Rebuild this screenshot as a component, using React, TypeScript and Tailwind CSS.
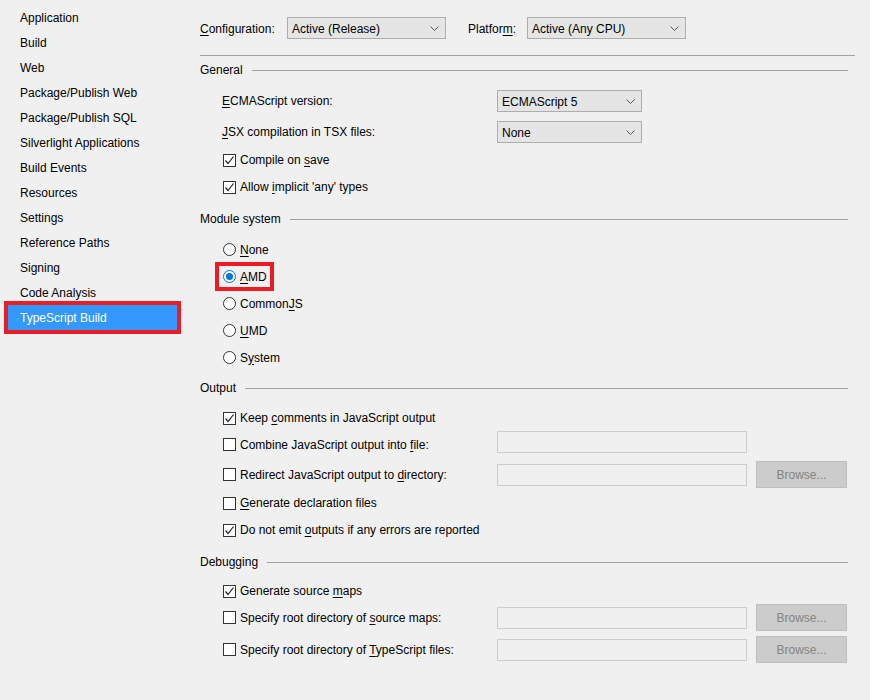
import type { ReactNode } from "react";

const navItems = [
  "Application",
  "Build",
  "Web",
  "Package/Publish Web",
  "Package/Publish SQL",
  "Silverlight Applications",
  "Build Events",
  "Resources",
  "Settings",
  "Reference Paths",
  "Signing",
  "Code Analysis",
  "TypeScript Build",
];

function K({ children }: { children: ReactNode }) {
  return <span className="underline underline-offset-[2px]">{children}</span>;
}

function Chevron() {
  return (
    <svg width="9" height="5" viewBox="0 0 9 5" className="shrink-0">
      <path d="M0.5 0.5 L4.5 4.5 L8.5 0.5" fill="none" stroke="#555" strokeWidth="1" />
    </svg>
  );
}

function Dropdown({ text, w }: { text: string; w: string }) {
  return (
    <div className={`${w} h-[22px] flex items-center justify-between pl-[4px] pr-[6px] bg-[#e5e5e5] border border-[#adadad]`}>
      <span className="pt-px">{text}</span>
      <Chevron />
    </div>
  );
}

function Checkbox({ checked }: { checked?: boolean }) {
  return (
    <div className="w-[13px] h-[13px] shrink-0 border border-[#333] bg-white flex items-center justify-center">
      {checked && (
        <svg width="11" height="11" viewBox="0 0 11 11">
          <path d="M1.5 5.5 L4 8.5 L9.5 1.5" fill="none" stroke="#222" strokeWidth="1.2" />
        </svg>
      )}
    </div>
  );
}

function Radio({ checked }: { checked?: boolean }) {
  return (
    <div
      className={`w-[13px] h-[13px] shrink-0 rounded-full border bg-white flex items-center justify-center ${
        checked ? "border-[#0078d7]" : "border-[#333]"
      }`}
    >
      {checked && <div className="w-[7px] h-[7px] rounded-full bg-[#0078d7]" />}
    </div>
  );
}

function SectionHeader({ title, className }: { title: string; className: string }) {
  return (
    <div className={`h-[20px] flex items-center pr-[7px] ${className}`}>
      <span>{title}</span>
      <div className="flex-1 h-px bg-[#a0a0a0] ml-[9px]" />
    </div>
  );
}

function TextBox() {
  return <div className="w-[250px] h-[22px] bg-[#f0f0f0] border border-[#cccccc]" />;
}

function Browse() {
  return (
    <div className="ml-[9px] w-[91px] h-[27px] bg-[#cccccc] border border-[#bfbfbf] flex items-center justify-center text-[#838383]">
      Browse...
    </div>
  );
}

function CheckRow({
  checked,
  label,
  className,
  h = "h-[22px]",
  labelClass = "",
  box,
  browse,
}: {
  checked?: boolean;
  label: ReactNode;
  className: string;
  h?: string;
  labelClass?: string;
  box?: boolean;
  browse?: boolean;
}) {
  return (
    <div className={`${h} flex items-center pl-[23px] ${className}`}>
      <div className={`w-[274px] flex items-center gap-[4px] ${labelClass}`}>
        <Checkbox checked={checked} />
        <span>{label}</span>
      </div>
      {box && <TextBox />}
      {browse && <Browse />}
    </div>
  );
}

function RadioRow({ label, checked }: { label: ReactNode; checked?: boolean }) {
  return (
    <div className="h-[27px] flex items-center pl-[19px]">
      <div
        className={`inline-flex items-center gap-[4px] h-[21px] pl-[4px] pr-[3px] ${
          checked ? "outline-4 outline-[#ed1c24]" : ""
        }`}
      >
        <Radio checked={checked} />
        <span>{label}</span>
      </div>
    </div>
  );
}

export default function App() {
  return (
    <div
      className="w-[870px] h-[700px] bg-[#f0f0f0] text-black text-[12px] flex overflow-hidden"
      style={{ fontFamily: '"Liberation Sans", Arial, sans-serif' }}
    >
      {/* left nav */}
      <div className="w-[200px] shrink-0 pt-[5px] pl-[8px]">
        {navItems.map((item) => {
          const active = item === "TypeScript Build";
          return (
            <div
              key={item}
              className={`w-[169px] h-[25px] flex items-center pl-[12px] ${
                active ? "bg-[#3399ff] text-white outline-4 outline-[#ed1c24]" : ""
              }`}
            >
              {item}
            </div>
          );
        })}
      </div>

      {/* property page */}
      <div className="flex-1 flex flex-col pt-[17px] pr-[15px]">
        <div className="h-[22px] flex items-center">
          <span className="w-[87px] pt-px">
            <K>C</K>onfiguration:
          </span>
          <Dropdown text="Active (Release)" w="w-[159px]" />
          <span className="w-[59px] ml-[22px] pt-px">
            Platfor<K>m</K>:
          </span>
          <Dropdown text="Active (Any CPU)" w="w-[159px]" />
        </div>
        <div className="h-px bg-[#a0a0a0] mt-[16px]" />

        <SectionHeader title="General" className="mt-[4px]" />
        <div className="h-[22px] flex items-center pl-[22px] mt-[10px]">
          <span className="w-[275px]">
            <K>E</K>CMAScript version:
          </span>
          <Dropdown text="ECMAScript 5" w="w-[145px]" />
        </div>
        <div className="h-[22px] flex items-center pl-[22px] mt-[9px]">
          <span className="w-[275px]">
            <K>J</K>SX compilation in TSX files:
          </span>
          <Dropdown text="None" w="w-[145px]" />
        </div>
        <CheckRow checked label={<>Compile on <K>s</K>ave</>} className="mt-[6px]" />
        <CheckRow checked label={<>Allow <K>i</K>mplicit 'any' types</>} className="mt-[5px]" />

        <SectionHeader title="Module system" className="mt-[11px]" />
        <div className="mt-[7px] flex flex-col">
          <RadioRow label={<><K>N</K>one</>} />
          <RadioRow checked label={<><K>A</K>MD</>} />
          <RadioRow label={<>Common<K>J</K>S</>} />
          <RadioRow label={<><K>U</K>MD</>} />
          <RadioRow label={<>S<K>y</K>stem</>} />
        </div>

        <SectionHeader title="Output" className="mt-[7px]" />
        <CheckRow checked label={<>Keep <K>c</K>omments in JavaScript output</>} className="mt-[9px]" />
        <CheckRow
          label={<>Combine JavaScript output into <K>f</K>ile:</>}
          className="mt-[2px]"
          labelClass="pt-[5px]"
          box
        />
        <CheckRow
          label={<>Redirect JavaScript output to <K>d</K>irectory:</>}
          className="mt-[8px]"
          h="h-[27px]"
          box
          browse
        />
        <CheckRow label={<><K>G</K>enerate declaration files</>} className="mt-[4px]" />
        <CheckRow checked label={<>Do not emit <K>o</K>utputs if any errors are reported</>} className="mt-[5px]" />

        <SectionHeader title="Debugging" className="mt-[11px]" />
        <CheckRow checked label={<>Generate source <K>m</K>aps</>} className="mt-[8px]" />
        <CheckRow
          label={<>Specify root directory of <K>s</K>ource maps:</>}
          className="mt-[2px]"
          h="h-[27px]"
          box
          browse
        />
        <CheckRow
          label={<>Specify root directory of <K>T</K>ypeScript files:</>}
          className="mt-[5px]"
          h="h-[27px]"
          box
          browse
        />
      </div>
    </div>
  );
}
